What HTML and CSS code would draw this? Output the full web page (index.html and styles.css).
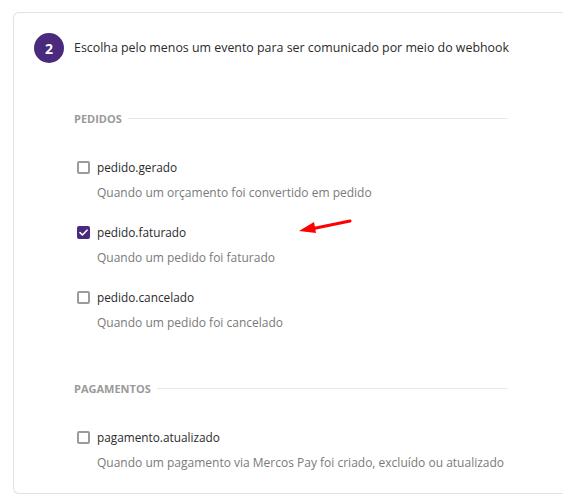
FILE: index.html
```html
<!DOCTYPE html>
<html>
<head>
	<title>Webhook - Eventos</title>
	<link rel="stylesheet" href="styles.css">
</head>
<body>
	<div class="card">
		<div class="step-header">
			<span class="step-number">2</span>
			<span class="step-title">Escolha pelo menos um evento para ser comunicado por meio do webhook</span>
		</div>

		<div class="events">
			<div class="group">
				<div class="group-title"><span>PEDIDOS</span></div>

				<div class="event">
					<label class="event-label"><span class="check"></span>pedido.gerado</label>
					<p class="event-desc">Quando um orçamento foi convertido em pedido</p>
				</div>

				<div class="event">
					<label class="event-label"><span class="check checked">
						<svg width="9" height="7" viewBox="0 0 9 7"><path d="M1 3.6 L3.4 6 L8 1.2" fill="none" stroke="#fff" stroke-width="1.6" stroke-linecap="round" stroke-linejoin="round"/></svg>
					</span>pedido.faturado</label>
					<p class="event-desc">Quando um pedido foi faturado</p>
				</div>

				<div class="event">
					<label class="event-label"><span class="check"></span>pedido.cancelado</label>
					<p class="event-desc">Quando um pedido foi cancelado</p>
				</div>
			</div>

			<div class="group">
				<div class="group-title"><span>PAGAMENTOS</span></div>

				<div class="event">
					<label class="event-label"><span class="check"></span>pagamento.atualizado</label>
					<p class="event-desc">Quando um pagamento via Mercos Pay foi criado, excluído ou atualizado</p>
				</div>
			</div>
		</div>
	</div>

	<!-- annotation arrow pointing at the checked event -->
	<svg class="annotation" width="60" height="20" viewBox="0 0 60 20">
		<line x1="51" y1="2" x2="12" y2="10" stroke="#f00" stroke-width="3" stroke-linecap="round"/>
		<polygon points="0,12 15,3 17,14" fill="#f00"/>
	</svg>
</body>
</html>
```

FILE: styles.css
```css
/* Webhook event selection step */

html, body {
	margin: 0;
	overflow: hidden;
	background: #fff;
}

body {
	position: relative;
	padding: 12px 0 0 13px;
	font-family: "Open Sans", sans-serif;
	font-size: 12.4px;
	color: #333;
}

/* the card continues past the right edge of the view */
.card {
	width: 550px;
	border: 1px solid #e2e2e2;
	border-right: none;
	border-radius: 6px 0 0 6px;
	padding: 20px;
	box-sizing: border-box;
}

.step-header {
	display: flex;
	align-items: center;
	gap: 10px;
}

.step-number {
	width: 30px;
	height: 30px;
	border-radius: 50%;
	background: #4a2a7c;
	color: #fff;
	font-weight: 700;
	font-size: 14px;
	display: flex;
	align-items: center;
	justify-content: center;
}

.step-title {
	line-height: 20px;
	color: #2b2b2b;
}

.events {
	width: 434px;
	margin-left: 40px;
}

.group {
	margin-top: 47px;
}

.group + .group {
	margin-top: 47px;
}

.group-title {
	display: flex;
	align-items: center;
	gap: 6px;
	height: 16px;
	font-size: 11px;
	font-weight: 700;
	color: #9a9a9a;
	margin-bottom: 31px;
}

.group-title::after {
	content: "";
	flex: 1;
	height: 1px;
	background: #e8e8e8;
}

.event {
	margin-bottom: 19px;
}

.group:last-child .event:last-child {
	margin-bottom: 0;
}

.event-label {
	display: flex;
	align-items: center;
	gap: 7px;
	line-height: 20px;
	font-size: 11.8px;
	color: #2b2b2b;
}

.check {
	width: 13px;
	height: 13px;
	margin-left: 3px;
	box-sizing: border-box;
	border: 2px solid #9b9b9b;
	border-radius: 2px;
	display: flex;
	align-items: center;
	justify-content: center;
}

.check.checked {
	background: #4a2a7c;
	border-color: #4a2a7c;
}

.event-desc {
	margin: 6px 0 0 23px;
	line-height: 20px;
	font-size: 12px;
	white-space: nowrap;
	color: #7a7a7a;
}

.annotation {
	position: absolute;
	left: 299px;
	top: 219px;
}
```
